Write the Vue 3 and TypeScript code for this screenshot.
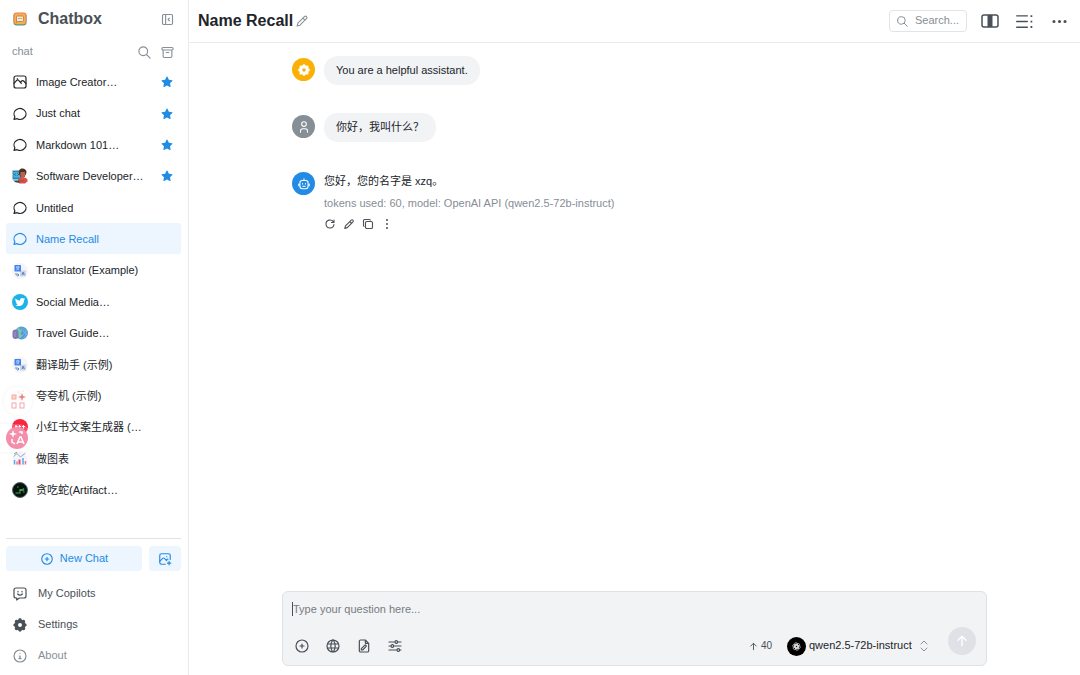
<script setup lang="ts">
import { h, ref } from 'vue'

interface Shape {
  d: string
  fill?: boolean
}

const icons: Record<string, Shape[]> = {
  chat: [{ d: 'M3 20l1.3 -3.9c-2.324 -3.437 -1.426 -7.872 2.1 -10.374c3.526 -2.501 8.59 -2.296 11.845 .48c3.255 2.777 3.695 7.266 1.029 10.501c-2.666 3.235 -7.615 4.215 -11.574 2.293l-4.7 1' }],
  photo: [
    { d: 'M3 6a3 3 0 0 1 3 -3h12a3 3 0 0 1 3 3v12a3 3 0 0 1 -3 3h-12a3 3 0 0 1 -3 -3z' },
    { d: 'M3 14l4 -4.500c1 -1 2 -1 3 0l4 4.500M13 12l1.500 -1.500c1 -.9 2 -.9 3 0l3.500 4M8 7h.01' },
  ],
  photoPlus: [
    { d: 'M12.500 21h-6.500a3 3 0 0 1 -3 -3v-12a3 3 0 0 1 3 -3h12a3 3 0 0 1 3 3v6.500' },
    { d: 'M3 16l5 -5c.928 -.893 2.072 -.893 3 0l4 4M14 14l1 -1c.67 -.644 1.450 -.824 2.182 -.54M16 19h6M19 16v6M15 8h.01' },
  ],
  collapse: [{ d: 'M4 6a2 2 0 0 1 2 -2h12a2 2 0 0 1 2 2v12a2 2 0 0 1 -2 2h-12a2 2 0 0 1 -2 -2zM9 4v16M15 10l-2 2l2 2' }],
  search: [{ d: 'M3 10a7 7 0 1 0 14 0a7 7 0 1 0 -14 0M21 21l-6 -6' }],
  archive: [{ d: 'M3 6a2 2 0 0 1 2 -2h14a2 2 0 0 1 0 4h-14a2 2 0 0 1 -2 -2M5 8v10a2 2 0 0 0 2 2h10a2 2 0 0 0 2 -2v-10M10 12h4' }],
  star: [{ fill: true, d: 'M8.243 7.34l-6.38 .925l-.113 .023a1 1 0 0 0 -.44 1.684l4.622 4.499l-1.09 6.355l-.013 .11a1 1 0 0 0 1.464 .944l5.706 -3l5.693 3l.1 .046a1 1 0 0 0 1.352 -1.1l-1.091 -6.355l4.624 -4.5l.078 -.085a1 1 0 0 0 -.633 -1.62l-6.38 -.926l-2.852 -5.78a1 1 0 0 0 -1.794 0z' }],
  circlePlus: [{ d: 'M3 12a9 9 0 1 0 18 0a9 9 0 1 0 -18 0M9 12h6M12 9v6' }],
  copilot: [{ d: 'M18 3a3 3 0 0 1 3 3v9a3 3 0 0 1 -3 3h-7l-4 3v-3h-1a3 3 0 0 1 -3 -3v-9a3 3 0 0 1 3 -3zM9 8v1M15 8v1M8.500 12a4.500 4.500 0 0 0 7 0' }],
  gear: [{ fill: true, d: 'M14.647 4.081a.724 .724 0 0 0 1.08 .448c2.439 -1.485 5.23 1.305 3.745 3.744a.724 .724 0 0 0 .447 1.08c2.775 .673 2.775 4.62 0 5.294a.724 .724 0 0 0 -.448 1.08c1.485 2.439 -1.305 5.23 -3.744 3.745a.724 .724 0 0 0 -1.08 .447c-.673 2.775 -4.62 2.775 -5.294 0a.724 .724 0 0 0 -1.08 -.448c-2.439 1.485 -5.23 -1.305 -3.745 -3.744a.724 .724 0 0 0 -.447 -1.08c-2.775 -.673 -2.775 -4.62 0 -5.294a.724 .724 0 0 0 .448 -1.08c-1.485 -2.439 1.305 -5.23 3.744 -3.745a.722 .722 0 0 0 1.08 -.447c.673 -2.775 4.62 -2.775 5.294 0zm-2.647 4.919a3 3 0 1 0 0 6a3 3 0 0 0 0 -6z' }],
  info: [{ d: 'M3 12a9 9 0 1 0 18 0a9 9 0 1 0 -18 0M12 8h.01M11 12h1v4M10.500 16h3' }],
  pencil: [{ d: 'M16.500 4.200a2.500 2.500 0 0 1 3.500 3.500l-11.500 11.500l-5 1.500l1.500 -5zM13.500 7.200l3.500 3.500' }],
  reload: [{ d: 'M19.933 13.041a8 8 0 1 1 -9.925 -8.788c3.899 -1 7.935 1.007 9.425 4.747M20 4v5h-5' }],
  copy: [{ d: 'M7 9.667a2.667 2.667 0 0 1 2.667 -2.667h8.666a2.667 2.667 0 0 1 2.667 2.667v8.666a2.667 2.667 0 0 1 -2.667 2.667h-8.666a2.667 2.667 0 0 1 -2.667 -2.667zM4.012 16.737a2 2 0 0 1 -1.012 -1.737v-10c0 -1.1 .9 -2 2 -2h10c.75 0 1.158 .385 1.5 1' }],
  dotsV: [{ fill: true, d: 'M10 4a2 2 0 1 0 4 0a2 2 0 1 0 -4 0M10 12a2 2 0 1 0 4 0a2 2 0 1 0 -4 0M10 20a2 2 0 1 0 4 0a2 2 0 1 0 -4 0' }],
  dots: [{ fill: true, d: 'M2 12a2.200 2.200 0 1 0 4.400 0a2.200 2.200 0 1 0 -4.400 0M9.800 12a2.200 2.200 0 1 0 4.400 0a2.200 2.200 0 1 0 -4.400 0M17.600 12a2.200 2.200 0 1 0 4.400 0a2.200 2.200 0 1 0 -4.400 0' }],
  user: [{ d: 'M8 7a4 4 0 1 0 8 0a4 4 0 0 0 -8 0M6 21v-2a4 4 0 0 1 4 -4h4a4 4 0 0 1 4 4v2' }],
  robot: [{ d: 'M12 3v3M9 6h6a4 4 0 0 1 4 4v6a4 4 0 0 1 -4 4h-6a4 4 0 0 1 -4 -4v-6a4 4 0 0 1 4 -4zM9.500 11v1M14.500 11v1M10 16h4M3 12v3M21 12v3' }],
  world: [{ d: 'M3 12a9 9 0 1 0 18 0a9 9 0 0 0 -18 0M3.600 9h16.800M3.600 15h16.800M11.500 3a17 17 0 0 0 0 18M12.500 3a17 17 0 0 1 0 18' }],
  filePencil: [{ d: 'M14 3v4a1 1 0 0 0 1 1h4M17 21h-10a2 2 0 0 1 -2 -2v-14a2 2 0 0 1 2 -2h7l5 5v11a2 2 0 0 1 -2 2zM10 18l5 -5a1.414 1.414 0 0 0 -2 -2l-5 5v2z' }],
  sliders: [{ d: 'M12 6a2 2 0 1 0 4 0a2 2 0 1 0 -4 0M3 6h9M16 6h5M6 12a2 2 0 1 0 4 0a2 2 0 1 0 -4 0M3 12h3M10 12h11M15 18a2 2 0 1 0 4 0a2 2 0 1 0 -4 0M3 18h12M19 18h2' }],
  selector: [{ d: 'M6 8l6 -6l6 6M6 16l6 6l6 -6' }],
  arrowUp: [{ d: 'M12 5v14M18 11l-6 -6l-6 6' }],
  thread: [
    { d: 'M1 4h15M1 12h15M1 20h15' },
    { fill: true, d: 'M20.500 3h2.500v2.500h-2.500zM20.500 10.800h2.500v2.500h-2.500zM20.500 18.500h2.500v2.500h-2.500z' },
  ],
}

interface Session {
  name: string
  icon: string
  starred?: boolean
}

const sessions: Session[] = [
  { name: 'Image Creator…', icon: 'photo', starred: true },
  { name: 'Just chat', icon: 'chat', starred: true },
  { name: 'Markdown 101…', icon: 'chat', starred: true },
  { name: 'Software Developer…', icon: 'developer', starred: true },
  { name: 'Untitled', icon: 'chat' },
  { name: 'Name Recall', icon: 'chat' },
  { name: 'Translator (Example)', icon: 'translate' },
  { name: 'Social Media…', icon: 'bird' },
  { name: 'Travel Guide…', icon: 'globe' },
  { name: '翻译助手 (示例)', icon: 'translate' },
  { name: '夸夸机 (示例)', icon: 'flower' },
  { name: '小红书文案生成器 (…', icon: 'red' },
  { name: '做图表', icon: 'chart' },
  { name: '贪吃蛇(Artifact…', icon: 'snake' },
]

const current = ref('Name Recall')
const draft = ref('')
const model = ref('qwen2.5-72b-instruct')
const messageTools = [
  { icon: 'reload', label: 'Regenerate' },
  { icon: 'pencil', label: 'Edit' },
  { icon: 'copy', label: 'Copy' },
  { icon: 'dotsV', label: 'More' },
]
const inputTools = [
  { icon: 'circlePlus', label: 'Attach' },
  { icon: 'world', label: 'Web browsing' },
  { icon: 'filePencil', label: 'Edit file' },
  { icon: 'sliders', label: 'Chat settings' },
]

const Icon = (props: { name: string }) =>
  h(
    'svg',
    { viewBox: '0 0 24 24', class: 'icon', 'aria-hidden': 'true' },
    icons[props.name].map((s) =>
      h('path', {
        d: s.d,
        fill: s.fill ? 'currentColor' : 'none',
        stroke: s.fill ? 'none' : 'currentColor',
      }),
    ),
  )
Icon.props = ['name']
</script>

<template>
  <div class="app">
    <aside class="sidebar">
      <header class="brand">
        <svg class="logo" viewBox="0 0 28 28" aria-hidden="true">
          <rect x="1" y="2" width="26" height="25" rx="6" fill="#38a88f" />
          <rect x="1" y="1" width="26" height="24" rx="6" fill="#ef7d55" />
          <rect x="3" y="3" width="22" height="21" rx="4" fill="#f4b04c" />
          <path d="M9 8h10a2 2 0 0 1 2 2v7a2 2 0 0 1-2 2h-9l-3 2V10a2 2 0 0 1 2-2z" fill="#fbe6c4" stroke="#a9764f" stroke-width="1.500" />
          <path d="M12 12v2M16 12v2" stroke="#75543d" stroke-width="1.500" />
        </svg>
        <h1>Chatbox</h1>
        <button class="plain" aria-label="Collapse sidebar"><Icon name="collapse" /></button>
      </header>

      <div class="section">
        <span class="section-name">chat</span>
        <button class="plain" aria-label="Search chats"><Icon name="search" /></button>
        <button class="plain" aria-label="Archive"><Icon name="archive" /></button>
      </div>

      <nav class="sessions" aria-label="Chats">
        <button
          v-for="s in sessions"
          :key="s.name"
          class="session"
          :class="{ active: s.name === current }"
          @click="current = s.name"
        >
          <Icon v-if="icons[s.icon]" :name="s.icon" />
          <svg v-else class="avatar-pic" viewBox="0 0 32 32" aria-hidden="true">
            <g v-if="s.icon === 'developer'">
              <path d="M1 5h19v18H1z" fill="#2888b5" />
              <path d="M3 8h14v11H3z" fill="#4fb0d3" />
              <path d="M7 11l-2 2 2 2M11 11l2 2-2 2" fill="none" stroke="#174f6d" stroke-width="2" />
              <path d="M14 12c-2-9 4-12 8-11s9 4 6 11l-3 6h-8z" fill="#513129" />
              <path d="M17 8h9v8c0 5-8 5-9 0z" fill="#b76544" />
              <path d="M12 29c-1-8 4-10 10-10s10 2 9 8l-5 4H15z" fill="#e04f49" />
              <path d="M2 25h11l3 4H8z" fill="#27465a" />
              <path d="M12 24l6 2 7-1" fill="none" stroke="#a8583d" stroke-width="3" />
            </g>
            <g v-else-if="s.icon === 'translate'">
              <circle cx="16" cy="16" r="16" fill="#f4f5f6" />
              <rect x="16" y="15" width="12" height="12" rx="1" fill="#cbd5e6" />
              <rect x="5" y="4" width="13" height="13" rx="1" fill="#4284ed" />
              <path d="M8 8h7M12 6v2M14 8c-1 4-4 5-5 6M9 9c1 3 3 4 5 5" fill="none" stroke="#cfe2ff" stroke-width="1.500" />
              <path d="M20 24l2-6 3 6M21 22h3M8 20v4h6M11 21l3 3-3 3" fill="none" stroke="#3f72c5" stroke-width="1.500" />
            </g>
            <g v-else-if="s.icon === 'bird'">
              <circle cx="16" cy="16" r="16" fill="#1bb3ea" />
              <path d="M7 9c3 3 6 4 9 4 0-6 5-6 7-4l3-1-2 3 2 0-2 2c0 8-6 12-12 11-2 0-4-1-5-2 3 0 4-1 5-2-2 0-4-1-4-3h2c-3-1-3-3-3-5l2 1C6 12 6 11 7 9z" fill="#fff" />
            </g>
            <g v-else-if="s.icon === 'globe'">
              <circle cx="19" cy="16" r="13" fill="#569bd2" />
              <path d="M11 6c5 0 5 4 9 5l-3 6 4 5-6 5-6-8z" fill="#70cbb5" />
              <path d="M20 5l10 10M17 7l13 13M23 27l8-12M19 23l11-13" stroke="#9dc6f1" stroke-width="1" />
              <rect x="1" y="9" width="12" height="19" rx="6" fill="#8178b4" />
              <path d="M6 14v10" fill="none" stroke="#a398ce" stroke-width="2" />
            </g>
            <g v-else-if="s.icon === 'flower'">
              <circle cx="16" cy="16" r="14" fill="#fff8f5" />
              <path d="M16 9v16" stroke="#8fc28b" stroke-width="2" />
              <circle cx="13" cy="8" r="3" fill="#f2b0a0" />
              <circle cx="22" cy="6" r="2" fill="#aacd91" />
            </g>
            <g v-else-if="s.icon === 'red'">
              <circle cx="16" cy="16" r="16" fill="#fa2742" />
              <path d="M6 15h5M8 12v7M13 15h5M15 12v7M20 15h6M23 12v7" stroke="#fff" stroke-width="2" />
            </g>
            <g v-else-if="s.icon === 'chart'">
              <circle cx="16" cy="16" r="15" fill="#f5f4fb" />
              <path d="M3 11l7-6 7 7 10-8" fill="none" stroke="#8190ac" stroke-width="1.500" />
              <path d="M5 18v9M22 14v13" stroke="#59a7ea" stroke-width="3" />
              <path d="M10 21v6M27 20v7" stroke="#eb7897" stroke-width="3" />
              <path d="M15 17v10" stroke="#d8526f" stroke-width="4" />
              <path d="M4 6l6-4" stroke="#62b791" stroke-width="2" />
            </g>
            <g v-else>
              <circle cx="16" cy="16" r="15" fill="#08120f" stroke="#59646a" stroke-width="2" />
              <path d="M7 22h9v-6h7v-4M10 10h3M22 20h3" fill="none" stroke="#237b42" stroke-width="3" />
              <path d="M15 16h8" stroke="#73c744" stroke-width="2" />
            </g>
          </svg>
          <span class="session-name">{{ s.name }}</span>
          <Icon v-if="s.starred" name="star" class="star" />
        </button>
      </nav>

      <footer class="side-footer">
        <div class="new-row">
          <button class="new-chat"><Icon name="circlePlus" />New Chat</button>
          <button class="new-image" aria-label="New image"><Icon name="photoPlus" /></button>
        </div>
        <button class="side-link"><Icon name="copilot" />My Copilots</button>
        <button class="side-link"><Icon name="gear" />Settings</button>
        <button class="side-link muted"><Icon name="info" />About</button>
      </footer>

      <div class="float float-grid">
        <svg viewBox="0 0 28 28" aria-hidden="true">
          <g fill="none" stroke="#f4a5ae" stroke-width="1">
            <rect x="8" y="8" width="4" height="4" fill="#ffd9b8" />
            <rect x="8" y="16" width="4" height="5" />
            <rect x="16" y="16" width="4" height="5" />
          </g>
          <path d="M18 6l1 3 3 1-3 1-1 3-1-3-3-1 3-1z" fill="#ee7f84" />
        </svg>
      </div>
      <div class="float float-translate">
        <svg viewBox="0 0 22 22" aria-hidden="true">
          <circle cx="11" cy="11" r="11" fill="#f48fab" />
          <path d="M7 3l1 3 3 1-3 1-1 3-1-3-3-1 3-1z" fill="#fff" />
          <path d="M11 17l3-7h1l3 7M12 15h5M6 12v3l3 2M13 5h3v2" fill="none" stroke="#fff" stroke-width="1.500" />
        </svg>
      </div>
    </aside>

    <main class="main">
      <header class="topbar">
        <h2>Name Recall</h2>
        <button class="plain rename" aria-label="Rename"><Icon name="pencil" /></button>
        <button class="search"><Icon name="search" />Search...</button>
        <button class="tool" aria-label="Toggle width">
          <svg class="columns" viewBox="0 0 18 14" aria-hidden="true">
            <rect x="1" y="1" width="16" height="12" rx="2" fill="none" stroke="currentColor" stroke-width="1.500" />
            <path d="M6.500 1h5v12h-5z" fill="currentColor" />
          </svg>
        </button>
        <button class="tool" aria-label="Threads"><Icon name="thread" /></button>
        <button class="tool" aria-label="More"><Icon name="dots" /></button>
      </header>

      <section class="messages" aria-label="Messages">
        <div class="column thread">
          <article class="message">
            <span class="avatar system"><Icon name="gear" /></span>
            <p class="bubble">You are a helpful assistant.</p>
          </article>
          <article class="message">
            <span class="avatar user"><Icon name="user" /></span>
            <p class="bubble">你好，我叫什么？</p>
          </article>
          <article class="message">
            <span class="avatar bot"><Icon name="robot" /></span>
            <div class="reply">
              <p>您好，您的名字是 xzq。</p>
              <p class="meta">tokens used: 60, model: OpenAI API (qwen2.5-72b-instruct)</p>
              <div class="actions">
                <button v-for="t in messageTools" :key="t.icon" class="plain" :aria-label="t.label">
                  <Icon :name="t.icon" />
                </button>
              </div>
            </div>
          </article>
        </div>
      </section>

      <form class="column composer" @submit.prevent>
        <div class="field">
          <span class="caret"></span>
          <textarea v-model="draft" rows="1" aria-label="Message" placeholder="Type your question here..."></textarea>
        </div>
        <div class="composer-bar">
          <button v-for="t in inputTools" :key="t.icon" type="button" class="plain" :aria-label="t.label">
            <Icon :name="t.icon" />
          </button>
          <span class="count"><Icon name="arrowUp" />40</span>
          <label class="model">
            <svg class="model-logo" viewBox="0 0 20 20" aria-hidden="true">
              <circle cx="10" cy="10" r="10" fill="#000" />
              <g fill="none" stroke="#e4e4e4" stroke-width="0.700">
                <rect v-for="n in 6" :key="n" x="8" y="6" width="3" height="6" rx="1.500" :transform="`rotate(${n * 60} 10 10)`" />
              </g>
            </svg>
            <select v-model="model" aria-label="Model">
              <option>qwen2.5-72b-instruct</option>
            </select>
            <Icon name="selector" />
          </label>
          <button type="submit" class="send" aria-label="Send"><Icon name="arrowUp" /></button>
        </div>
      </form>
    </main>
  </div>
</template>

<style>
body {
  margin: 0;
}
</style>

<style scoped>
.app {
  display: flex;
  height: 100vh;
  overflow: hidden;
  background: #fff;
  color: #212529;
  font: 11px/1.4 "Liberation Sans", "Noto Sans CJK SC", sans-serif;
}
.app * {
  box-sizing: border-box;
}
h1,
h2,
p {
  margin: 0;
}
button,
select,
textarea {
  margin: 0;
  padding: 0;
  border: 0;
  background: none;
  color: inherit;
  font: inherit;
}
:deep(.icon) {
  display: block;
  flex: none;
  width: 16px;
  height: 16px;
  stroke-width: 1.8;
  stroke-linecap: round;
  stroke-linejoin: round;
}
.plain {
  display: block;
  flex: none;
}

.sidebar {
  position: relative;
  display: flex;
  flex: none;
  flex-direction: column;
  width: 189px;
  padding: 0 7px 0 6px;
  border-right: 1px solid #e9ecef;
}
.brand {
  display: flex;
  align-items: center;
  height: 38px;
  padding: 0 6px 0 7px;
  color: #868e96;
}
.logo {
  flex: none;
  width: 14px;
  height: 14px;
  margin-right: 11px;
}
.brand h1 {
  flex: 1;
  color: #495057;
  font-size: 16px;
  line-height: 22px;
}
.section {
  display: flex;
  align-items: center;
  gap: 8px;
  height: 28px;
  padding: 0 6px;
  color: #868e96;
}
.section-name {
  flex: 1;
}
.brand :deep(.icon),
.section :deep(.icon) {
  width: 15px;
  height: 15px;
}
.sessions {
  display: flex;
  flex: 1;
  flex-direction: column;
  min-height: 0;
  overflow: hidden;
}
.session {
  display: flex;
  flex: none;
  align-items: center;
  gap: 8px;
  padding: 8px 6px 7px;
  border-radius: 3px;
  text-align: left;
}
.session :deep(.icon),
.avatar-pic {
  flex: none;
  width: 16px;
  height: 16px;
}
.session-name {
  flex: 1;
  padding-top: 1px;
  white-space: nowrap;
}
.session .star.icon {
  width: 12px;
  height: 12px;
  margin-right: 2px;
  color: #228be6;
}
.session.active {
  background: #edf5fe;
  color: #228be6;
}
.side-footer {
  display: flex;
  flex: none;
  flex-direction: column;
  padding: 7px 0 4px;
  border-top: 1px solid #dee2e6;
}
.new-row {
  display: flex;
  gap: 7px;
  margin-bottom: 7px;
  color: #228be6;
}
.new-chat,
.new-image {
  display: flex;
  align-items: center;
  justify-content: center;
  gap: 6px;
  height: 25px;
  border-radius: 4px;
  background: #edf5fe;
}
.new-chat {
  flex: 1;
}
.new-image {
  width: 32px;
}
.new-row :deep(.icon) {
  width: 14px;
  height: 14px;
  stroke-width: 2;
}
.side-link {
  display: flex;
  align-items: center;
  gap: 10px;
  height: 31px;
  padding: 0 6px;
  color: #495057;
  text-align: left;
}
.side-link.muted {
  color: #868e96;
}

.float {
  position: absolute;
  display: flex;
  align-items: center;
  justify-content: center;
  background: rgba(255, 255, 255, 0.8);
  box-shadow: 0 0 4px rgba(0, 0, 0, 0.06);
}
.float-grid {
  top: 387px;
  left: 4px;
  width: 28px;
  height: 28px;
  border-radius: 14px;
}
.float-grid svg {
  width: 28px;
}
.float-translate {
  top: 424px;
  left: 0;
  width: 32px;
  height: 28px;
  padding-left: 2px;
  border-radius: 0 14px 14px 0;
  background: rgba(255, 255, 255, 0.2);
}
.float-translate svg {
  width: 22px;
}

.main {
  display: flex;
  flex: 1;
  flex-direction: column;
  min-width: 0;
}
.topbar {
  display: flex;
  flex: none;
  align-items: center;
  height: 43px;
  padding: 0 12px 0 9px;
  border-bottom: 1px solid #e9ecef;
  color: #495057;
}
.topbar h2 {
  color: #212529;
  font-size: 16px;
  line-height: 22px;
}
.rename {
  flex: 1;
  padding-left: 2px;
  color: #868e96;
}
.rename :deep(.icon) {
  width: 14px;
  height: 14px;
}
.search {
  display: flex;
  align-items: center;
  gap: 6px;
  height: 22px;
  margin-right: 5px;
  padding: 0 7px 0 6px;
  border: 1px solid #e1e4e8;
  border-radius: 4px;
  color: #868e96;
}
.search :deep(.icon) {
  width: 13px;
  height: 13px;
}
.tool {
  display: flex;
  align-items: center;
  justify-content: center;
  width: 35px;
  height: 28px;
}
.tool:last-child {
  margin-right: -9px;
}
.tool :deep(.icon) {
  width: 17px;
  height: 17px;
  stroke-width: 2;
}
.columns {
  width: 18px;
  height: 14px;
}

.column {
  width: calc(100% - 20px);
  max-width: 705px;
  margin: 0 auto;
}
.messages {
  flex: 1;
  min-height: 0;
  overflow: hidden;
}
.thread {
  display: flex;
  flex-direction: column;
  gap: 28px;
  padding: 13px 10px;
}
.message {
  display: flex;
  align-items: flex-start;
  gap: 9px;
}
.avatar {
  display: flex;
  flex: none;
  align-items: center;
  justify-content: center;
  width: 23px;
  height: 23px;
  margin-top: 2px;
  border-radius: 50%;
  color: #fff;
}
.avatar :deep(.icon) {
  width: 14px;
  height: 14px;
}
.system {
  background: #fab005;
}
.user {
  background: #868e96;
}
.bot {
  background: #228be6;
}
.bubble {
  padding: 7px 12px;
  border-radius: 14px;
  background: #f1f3f5;
  line-height: 15px;
}
.reply {
  line-height: 22px;
}
.meta {
  color: #868e96;
}
.actions {
  display: flex;
  gap: 7px;
  padding-top: 4px;
  color: #495057;
}
.actions :deep(.icon) {
  width: 12px;
  height: 12px;
  stroke-width: 2.2;
}

.composer {
  flex: none;
  margin-bottom: 9px;
  padding: 8px 9px 10px;
  border: 1px solid #dee2e6;
  border-radius: 6px;
  background: #f1f3f5;
}
.field {
  display: flex;
  align-items: center;
  height: 17px;
}
.caret {
  width: 1px;
  height: 14px;
  background: #495057;
}
textarea {
  flex: 1;
  height: 16px;
  outline: 0;
  line-height: 16px;
  resize: none;
}
textarea::placeholder {
  color: #777c81;
}
.composer-bar {
  display: flex;
  align-items: center;
  gap: 15px;
  height: 28px;
  margin-top: 10px;
  padding: 0 1px 0 2px;
  color: #495057;
}
.composer-bar .plain {
  padding-top: 10px;
}
.count {
  display: flex;
  align-items: center;
  gap: 2px;
  margin-left: auto;
  padding-top: 10px;
  font-size: 10px;
}
.count :deep(.icon) {
  width: 11px;
  height: 11px;
  stroke-width: 2;
}
.model {
  display: flex;
  align-items: center;
  gap: 3px;
  margin-right: 3px;
  padding-top: 10px;
  color: #212529;
}
.model-logo {
  width: 19px;
  height: 19px;
}
select {
  appearance: none;
  outline: 0;
}
.model :deep(.icon) {
  width: 12px;
  height: 12px;
  margin-left: 3px;
  color: #868e96;
  stroke-width: 2;
}
.send {
  display: flex;
  flex: none;
  align-items: center;
  justify-content: center;
  width: 28px;
  height: 28px;
  border-radius: 50%;
  background: #dee2e6;
  color: #fff;
}
.send :deep(.icon) {
  stroke-width: 2;
}
</style>
